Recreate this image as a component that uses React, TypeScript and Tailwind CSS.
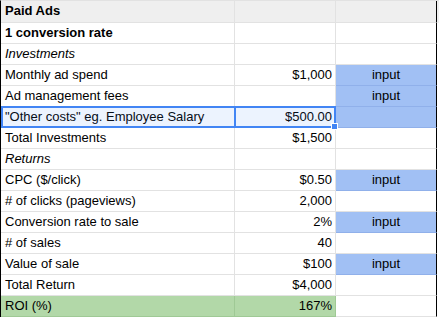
type Row = {
  label: string;
  value?: string;
  input?: string;
  bold?: boolean;
  italic?: boolean;
  header?: boolean;
  green?: boolean;
};

const rows: Row[] = [
  { label: "Paid Ads", bold: true, header: true },
  { label: "1 conversion rate", bold: true },
  { label: "Investments", italic: true },
  { label: "Monthly ad spend", value: "$1,000", input: "input" },
  { label: "Ad management fees", input: "input" },
  { label: "\"Other costs\" eg. Employee Salary", value: "$500.00", input: "" },
  { label: "Total Investments", value: "$1,500" },
  { label: "Returns", italic: true },
  { label: "CPC ($/click)", value: "$0.50", input: "input" },
  { label: "# of clicks (pageviews)", value: "2,000" },
  { label: "Conversion rate to sale", value: "2%", input: "input" },
  { label: "# of sales", value: "40" },
  { label: "Value of sale", value: "$100", input: "input" },
  { label: "Total Return", value: "$4,000" },
  { label: "ROI (%)", value: "167%", green: true },
];

function SheetRow({ row, first }: { row: Row; first: boolean }) {
  const height = first ? "h-[22px]" : "h-[21px]";
  const rowBg = row.header ? "bg-[#efefef]" : "bg-white";

  let fill = "bg-transparent border-[#e2e2e2]";
  if (row.green) fill = "bg-[#b2d8a8] border-[#9fc995]";

  const textStyle = row.bold ? "font-bold" : row.italic ? "italic" : "";
  const isInput = row.input !== undefined;

  return (
    <div className={`flex ${height} ${rowBg}`}>
      <div className={`w-[234px] shrink-0 border-r border-b ${fill} px-[4px] leading-[20px] whitespace-nowrap ${textStyle}`}>
        {row.label}
      </div>
      <div className={`w-[101px] shrink-0 border-r border-b ${fill} px-[3px] leading-[20px] text-right`}>
        {row.value}
      </div>
      {isInput ? (
        <div className="w-[101px] shrink-0 border-b border-b-[#90b0ea] border-r border-r-black bg-[#a1c0f4] leading-[20px] text-center">
          {row.input}
        </div>
      ) : (
        <div className="w-[101px] shrink-0 border-b border-b-[#e2e2e2] border-r border-r-black leading-[20px] text-center" />
      )}
      <div className="flex-1" />
    </div>
  );
}

export default function App() {
  return (
    <div className="relative w-[439px] h-[317px] overflow-hidden bg-white text-[13px] text-black font-['Liberation_Sans',Arial,sans-serif]">
      <div className="border-t border-t-[#e2e2e2] border-l border-l-black">
        {rows.map((row, i) => (
          <SheetRow key={i} row={row} first={i === 0} />
        ))}
      </div>

      {/* selected range tint */}
      <div className="absolute left-[1px] top-[106px] w-[335px] h-[22px] bg-[#4285f4]/10 pointer-events-none" />
      {/* range outline */}
      <div className="absolute left-[1px] top-[106px] w-[335px] h-[22px] border-2 border-[#4285f4] pointer-events-none" />
      {/* active cell */}
      <div className="absolute left-[1px] top-[106px] w-[235px] h-[22px] border-2 border-[#4285f4] pointer-events-none" />
      {/* fill handle */}
      <div className="absolute left-[331px] top-[123px] w-[7px] h-[7px] bg-[#4285f4] border border-white pointer-events-none" />
    </div>
  );
}
